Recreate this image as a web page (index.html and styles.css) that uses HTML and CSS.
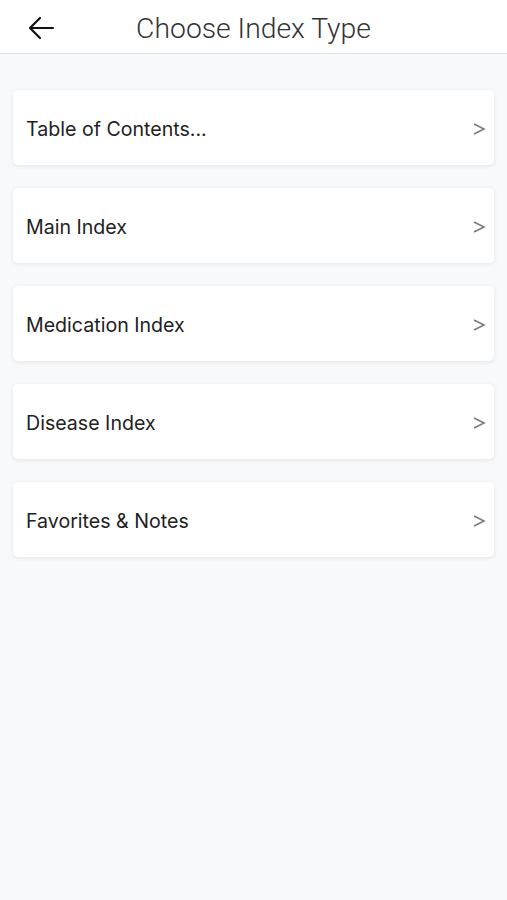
FILE: index.html
```html
<!DOCTYPE html>
<html lang="en">
<head>
  <meta charset="UTF-8" />
  <meta name="viewport" content="width=device-width, initial-scale=1" />
  <title>Choose Index Type</title>
  <link rel="stylesheet" href="styles.css">
</head>
<body>
  <header class="topbar">
    <button class="back" aria-label="Back">
      <svg width="28" height="24" viewBox="0 0 28 24">
        <path d="M26 12H3M13 2L3 12l10 10" fill="none" stroke="#111" stroke-width="2.2" stroke-linecap="round" stroke-linejoin="round"/>
      </svg>
    </button>
    <h1>Choose Index Type</h1>
  </header>

  <main class="list">
    <a class="card" href="#"><span>Table of Contents...</span><svg class="chev" width="14" height="14" viewBox="0 0 14 14"><path d="M2 2l10 5-10 5" fill="none" stroke="#7a7a7a" stroke-width="1.6"/></svg></a>
    <a class="card" href="#"><span>Main Index</span><svg class="chev" width="14" height="14" viewBox="0 0 14 14"><path d="M2 2l10 5-10 5" fill="none" stroke="#7a7a7a" stroke-width="1.6"/></svg></a>
    <a class="card" href="#"><span>Medication Index</span><svg class="chev" width="14" height="14" viewBox="0 0 14 14"><path d="M2 2l10 5-10 5" fill="none" stroke="#7a7a7a" stroke-width="1.6"/></svg></a>
    <a class="card" href="#"><span>Disease Index</span><svg class="chev" width="14" height="14" viewBox="0 0 14 14"><path d="M2 2l10 5-10 5" fill="none" stroke="#7a7a7a" stroke-width="1.6"/></svg></a>
    <a class="card" href="#"><span>Favorites &amp; Notes</span><svg class="chev" width="14" height="14" viewBox="0 0 14 14"><path d="M2 2l10 5-10 5" fill="none" stroke="#7a7a7a" stroke-width="1.6"/></svg></a>
  </main>
</body>
</html>
```

FILE: styles.css
```css
body {
  margin: 0;
  min-height: 100vh;
  background-color: #f8f9fb;
  font-family: Inter, "Liberation Sans", Arial, sans-serif;
}

.topbar {
  height: 53px;
  background: white;
  border-bottom: 1px solid #e2e2e2;
  display: flex;
  align-items: center;
  justify-content: center;
  position: relative;
}

.back {
  position: absolute;
  left: 27px;
  top: 16px;
  padding: 0;
  border: none;
  background: none;
  cursor: pointer;
}

.back svg {
  display: block;
}

.topbar h1 {
  margin: 4px 0 0;
  font-family: Roboto, "Liberation Sans", sans-serif;
  font-weight: 300;
  font-size: 28.3px;
  color: #333;
}

.list {
  display: flex;
  flex-direction: column;
  gap: 23px;
  padding: 36px 13px 0;
}

.card {
  height: 75px;
  display: flex;
  align-items: center;
  justify-content: space-between;
  padding: 2px 8px 0 13px;
  box-sizing: border-box;
  background: white;
  border-radius: 5px;
  box-shadow: 0 1px 5px rgba(0, 0, 0, 0.09);
  color: #222;
  text-decoration: none;
  font-size: 19.6px;
}

.chev {
  display: block;
}
```
